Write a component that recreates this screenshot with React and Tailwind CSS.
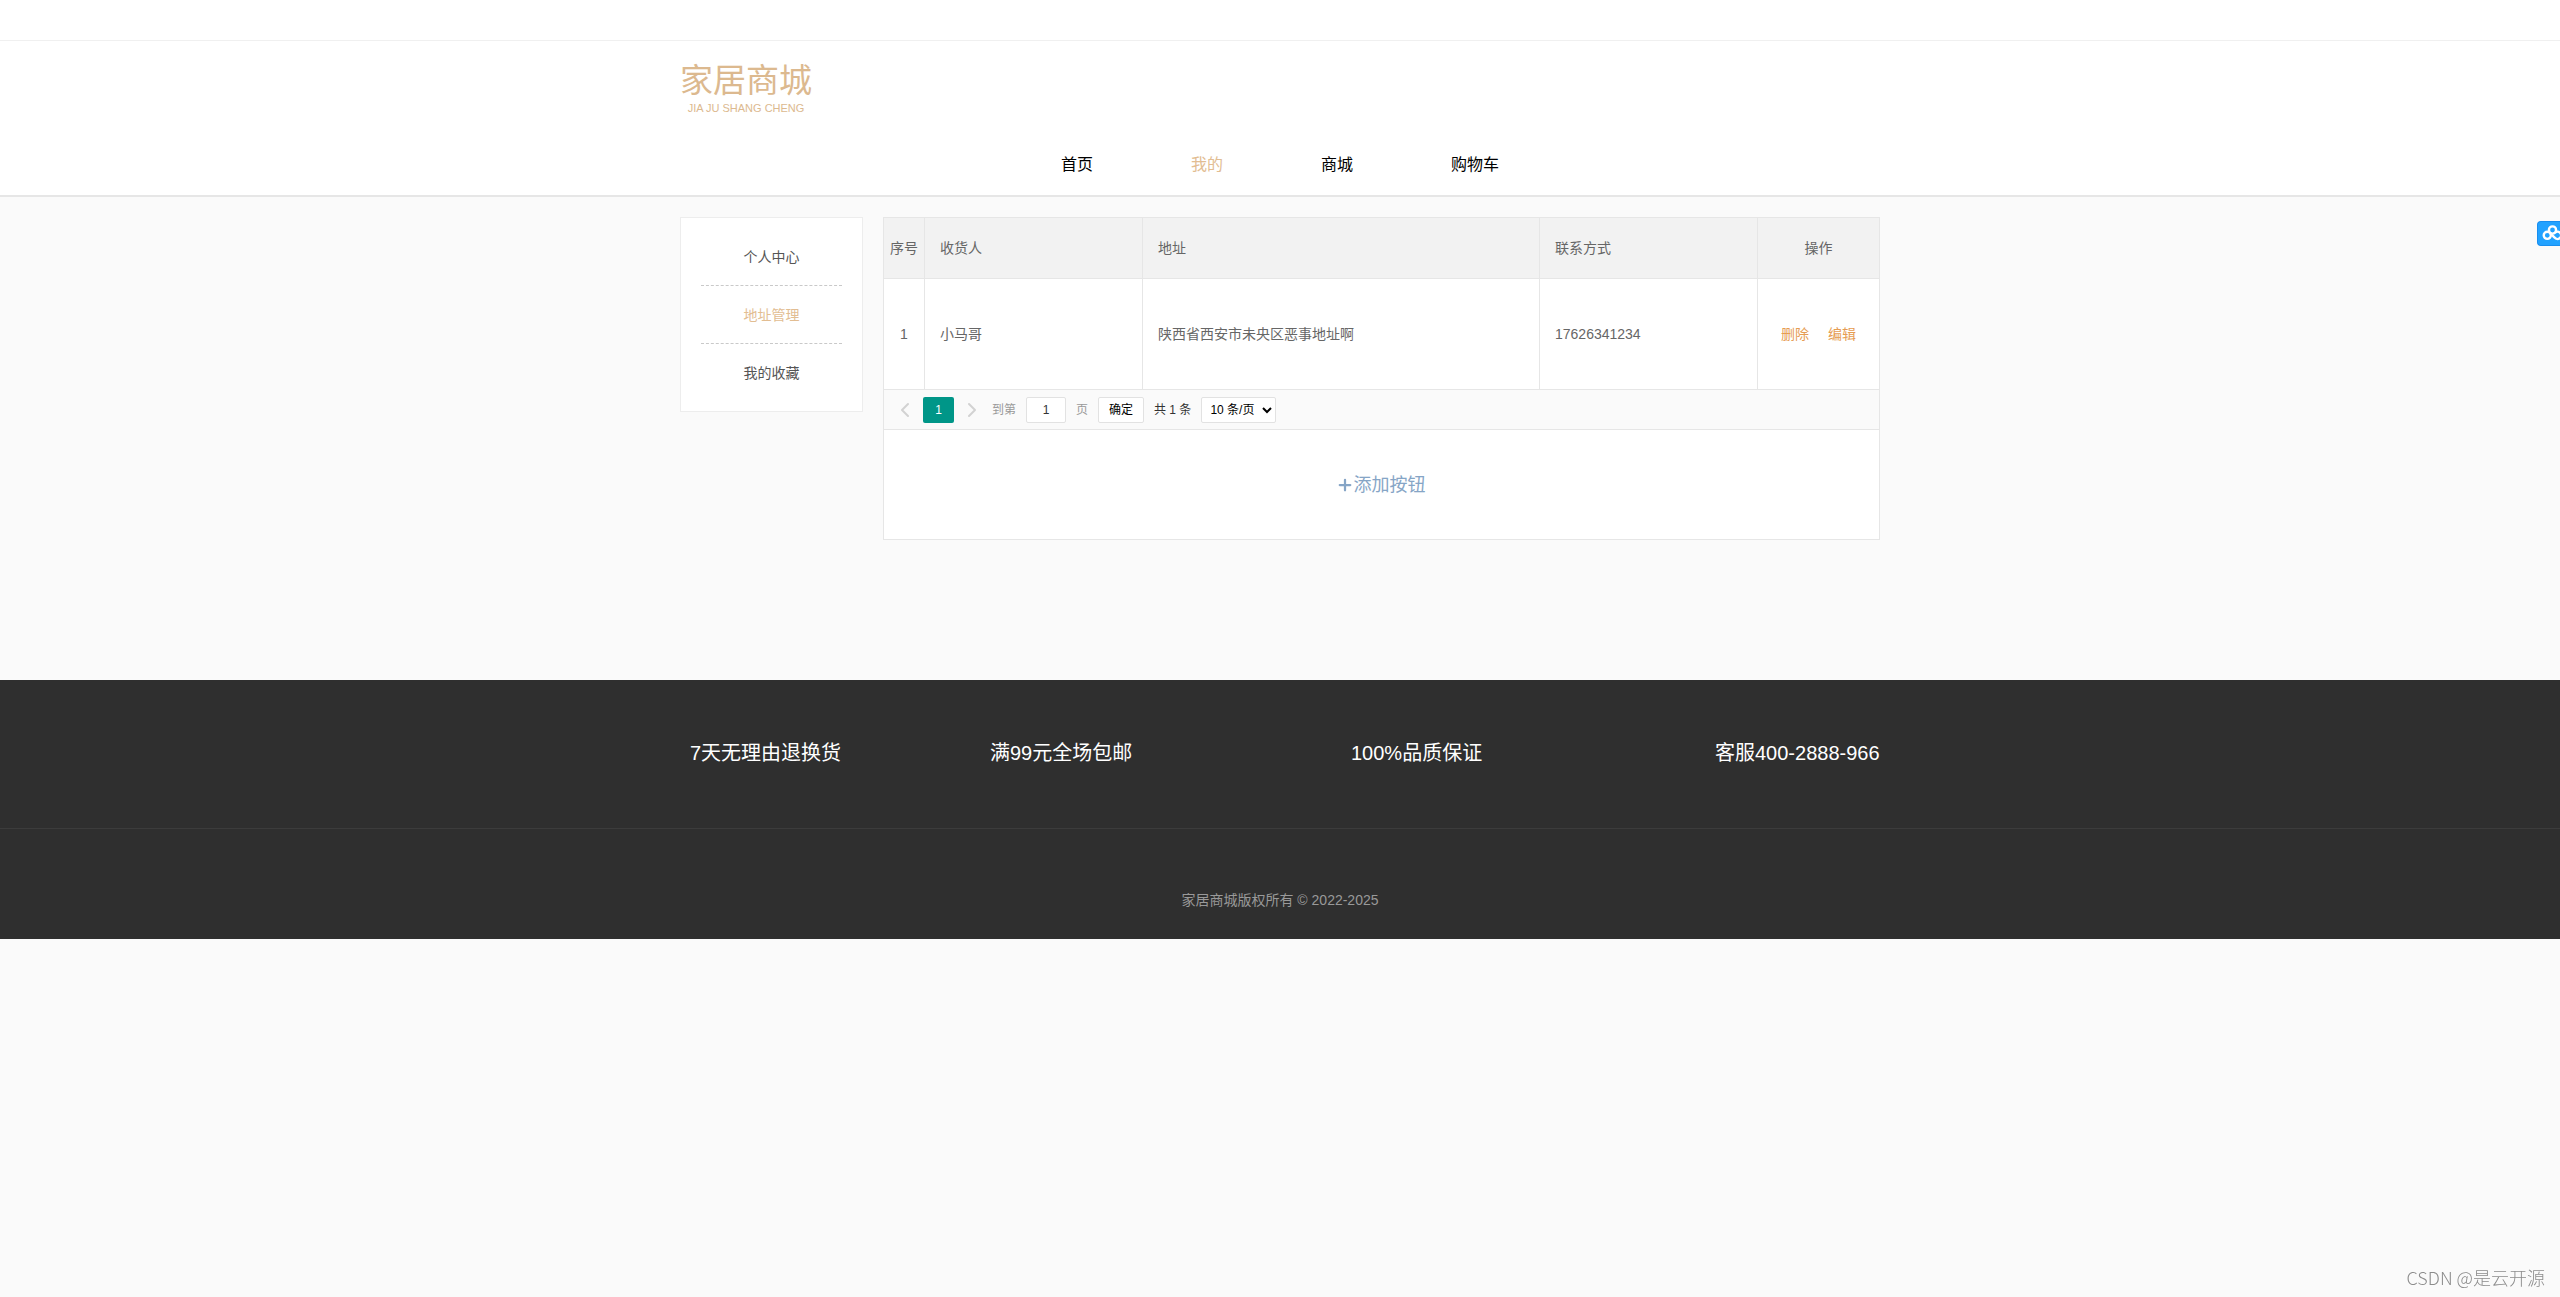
import { useState } from 'react'
import { ChevronLeft, ChevronRight, Plus } from 'lucide-react'

const navItems = [
  { label: '首页', href: '#home' },
  { label: '我的', href: '#mine', active: true },
  { label: '商城', href: '#shop' },
  { label: '购物车', href: '#cart' },
]

const menuItems = [
  { label: '个人中心', href: '#profile' },
  { label: '地址管理', href: '#address', active: true },
  { label: '我的收藏', href: '#favorites' },
]

const addresses = [
  { id: 1, name: '小马哥', address: '陕西省西安市未央区恶事地址啊', phone: '17626341234' },
]

const promises = ['7天无理由退换货', '满99元全场包邮', '100%品质保证', '客服400-2888-966']

function Header() {
  return (
    <header className="border-b-2 border-[#e6e6e6] bg-white">
      <div className="h-[41px] border-b border-[#f0f0f0]" />
      <div className="mx-auto max-w-[1200px] pt-[21px] pb-3">
        <a href="#home" className="flex w-fit flex-col items-center text-[#dcb98f]">
          <span className="text-[33px] leading-[38px]">家居商城</span>
          <span className="text-[11px] leading-4">JIA JU SHANG CHENG</span>
        </a>
        <nav className="mt-[31px] flex justify-center gap-[98px] leading-9">
          {navItems.map((item) => (
            <a key={item.label} href={item.href} className={item.active ? 'text-[#e2bd92]' : 'text-black'}>
              {item.label}
            </a>
          ))}
        </nav>
      </div>
    </header>
  )
}

function SideMenu() {
  return (
    <aside className="w-[183px] shrink-0 self-start border border-[#ededed] bg-white px-5 py-[10px]">
      <ul className="divide-y divide-dashed divide-[#c9c9c9] text-center text-sm">
        {menuItems.map((item) => (
          <li key={item.label}>
            <a
              href={item.href}
              className={`block pt-[2px] pb-px leading-[54px] ${item.active ? 'text-[#e2bd92]' : 'text-[#555]'}`}
            >
              {item.label}
            </a>
          </li>
        ))}
      </ul>
    </aside>
  )
}

function AddressTable() {
  return (
    <table className="w-full table-fixed border-collapse bg-white text-left text-sm text-[#666] [&_td]:border [&_td]:border-[#e6e6e6] [&_th]:border [&_th]:border-[#e6e6e6] [&_th]:font-normal">
      <colgroup>
        <col className="w-[41px]" />
        <col className="w-[218px]" />
        <col />
        <col className="w-[218px]" />
        <col className="w-[122px]" />
      </colgroup>
      <thead>
        <tr className="h-[61px] bg-[#f2f2f2]">
          <th className="text-center">序号</th>
          <th className="px-[15px]">收货人</th>
          <th className="px-[15px]">地址</th>
          <th className="px-[15px]">联系方式</th>
          <th className="text-center">操作</th>
        </tr>
      </thead>
      <tbody>
        {addresses.map((row) => (
          <tr key={row.id} className="h-[111px]">
            <td className="text-center">{row.id}</td>
            <td className="px-[15px]">{row.name}</td>
            <td className="px-[15px]">{row.address}</td>
            <td className="px-[15px]">{row.phone}</td>
            <td>
              <div className="flex justify-center gap-[19px] text-[#e69c52]">
                <button type="button">删除</button>
                <button type="button">编辑</button>
              </div>
            </td>
          </tr>
        ))}
      </tbody>
    </table>
  )
}

function Pagination() {
  const [page, setPage] = useState('1')

  return (
    <div className="flex h-10 items-center gap-[10px] border-x border-b border-[#e6e6e6] pl-[9px] text-xs text-[#333]">
      <div className="flex items-center">
        <button type="button" aria-label="上一页" className="flex w-[30px] text-[#d2d2d2]">
          <ChevronLeft size={24} strokeWidth={2} />
        </button>
        <button type="button" className="h-[26px] w-[31px] rounded-xs bg-[#009688] text-white">
          1
        </button>
        <button type="button" aria-label="下一页" className="flex w-7 justify-center pl-2 text-[#d2d2d2]">
          <ChevronRight size={24} strokeWidth={2} className="shrink-0" />
        </button>
      </div>
      <label htmlFor="page" className="text-[#999]">到第</label>
      <input
        id="page"
        value={page}
        onChange={(e) => setPage(e.target.value)}
        className="h-[26px] w-10 rounded-xs border border-[#e2e2e2] bg-white text-center"
      />
      <span className="text-[#999]">页</span>
      <button type="button" className="h-[26px] w-[46px] rounded-xs border border-[#e2e2e2] bg-white text-black">
        确定
      </button>
      <span>共 1 条</span>
      <select
        aria-label="每页条数"
        className="h-[26px] w-[75px] rounded-xs border border-[#e2e2e2] bg-white pl-1 text-black"
      >
        <option>10 条/页</option>
        <option>20 条/页</option>
        <option>30 条/页</option>
      </select>
    </div>
  )
}

function Footer() {
  return (
    <footer className="bg-[#2f2f2f]">
      <div className="border-b border-[#3c3c3c] pt-[53px] pb-[55px]">
        <ul className="mx-auto grid max-w-[1200px] grid-cols-[300fr_361fr_364fr_165fr] pl-[10px] text-xl leading-10 whitespace-nowrap text-white">
          {promises.map((text) => (
            <li key={text}>{text}</li>
          ))}
        </ul>
      </div>
      <p className="pt-[59px] pb-[27px] text-center text-sm leading-6 text-[#999]">
        家居商城版权所有 © 2022-2025
      </p>
    </footer>
  )
}

function CloudButton() {
  return (
    <button
      type="button"
      aria-label="网盘"
      className="fixed top-[221px] right-0 h-[25px] w-[23px] overflow-hidden rounded-l border border-r-0 border-[#188ef0] bg-[#22a2ff]"
    >
      <svg width="22" height="23" viewBox="0 0 22 23" fill="none" stroke="#fff" strokeWidth="2.4">
        <circle cx="14.5" cy="8" r="3.6" />
        <circle cx="9.3" cy="13.3" r="3.6" />
        <path d="M12 11 L16.6 15.6 A3.6 3.6 0 1 0 17.2 10.5" />
      </svg>
    </button>
  )
}

export default function App() {
  return (
    <div className="min-h-screen bg-[#fafafa] font-['Liberation_Sans','Noto_Sans_CJK_SC',sans-serif]">
      <Header />
      <main className="mx-auto flex max-w-[1200px] gap-5 pt-5 pb-[140px]">
        <SideMenu />
        <section className="min-w-0 flex-1">
          <AddressTable />
          <Pagination />
          <button
            type="button"
            className="flex h-[110px] w-full items-center justify-center border-x border-b border-[#e6e6e6] bg-white pr-[2px] text-lg text-[#86a5c6]"
          >
            <Plus size={18} strokeWidth={3} />
            添加按钮
          </button>
        </section>
      </main>
      <Footer />
      <CloudButton />
      <div className="fixed right-[15px] bottom-[6px] font-['Noto_Sans_CJK_SC',sans-serif] text-lg font-light text-[#8c8c8c]">
        CSDN @是云开源
      </div>
    </div>
  )
}
